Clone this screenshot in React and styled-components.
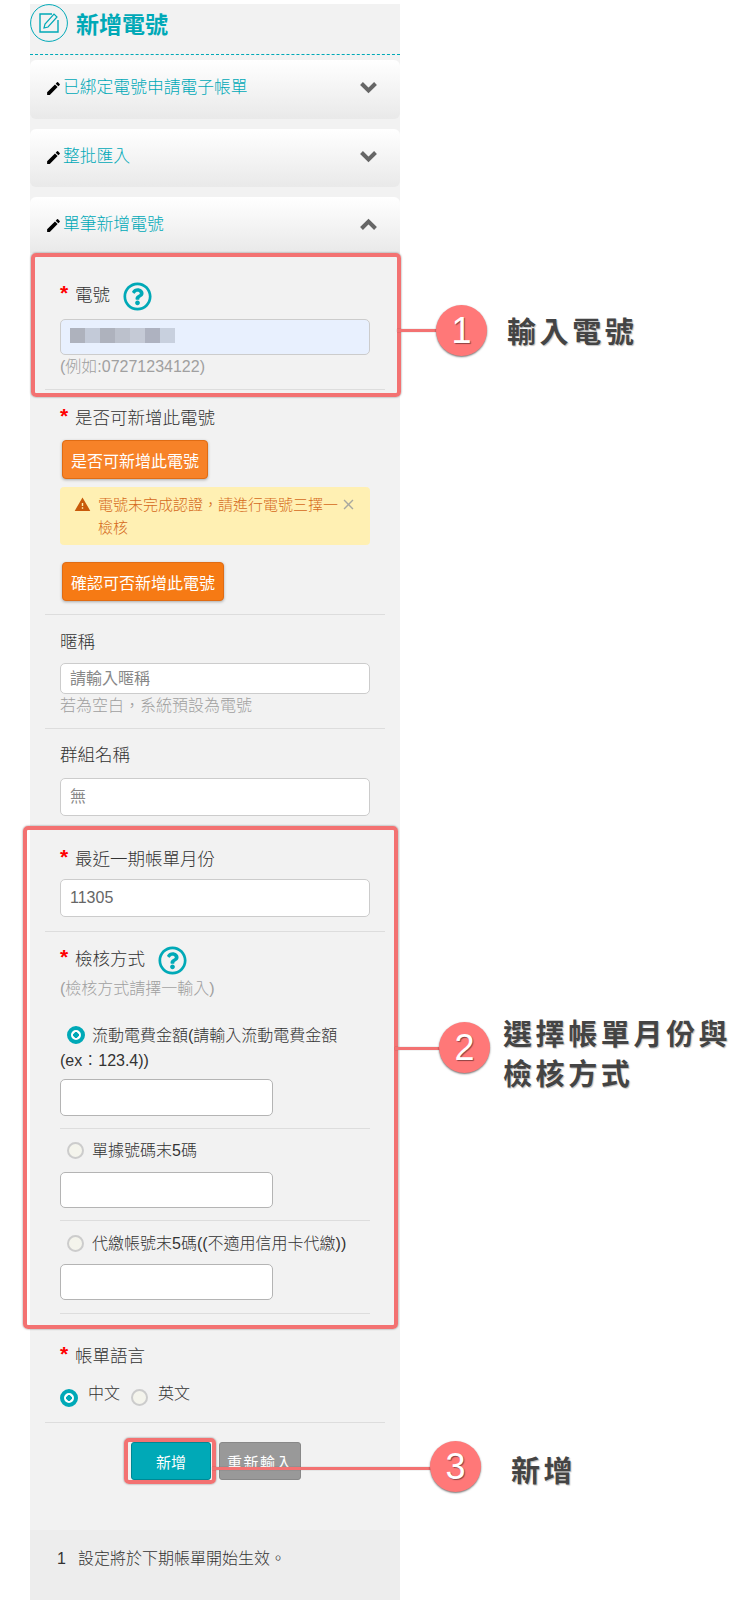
import React from 'react';
import styled, {createGlobalStyle} from 'styled-components';
import {MdEdit, MdWarning, MdClose} from 'react-icons/md';
import {FaRegQuestionCircle} from 'react-icons/fa';

const teal = '#00a9b7';
const coral = '#f37272';

const GlobalStyle = createGlobalStyle`
  html, body {
    margin: 0;
    padding: 0;
    background: #fff;
    font-family: "Liberation Sans", "Noto Sans CJK TC", sans-serif;
    font-weight: 300;
    color: #333;
  }
`;

const Page = styled.div`
  position: relative;
  width: 736px;
  height: 1601px;
  overflow: hidden;
  padding-top: 4px;
  box-sizing: border-box;
`;

const Panel = styled.div`
  margin-left: 30px;
  width: 370px;
  height: 1596px;
  background: #f2f2f2;
  display: flex;
  flex-direction: column;
`;

const Header = styled.div`
  height: 50px;
  display: flex;
  align-items: flex-start;
  gap: 8px;
  border-bottom: 1px dashed ${teal};
  box-sizing: content-box;
`;

const HeaderIcon = styled.svg`
  width: 38px;
  height: 38px;
`;

const HeaderTitle = styled.h1`
  margin: 0;
  font-size: 23px;
  line-height: 42px;
  font-weight: 700;
  color: ${teal};
`;

const AccordionHead = styled.div`
  height: ${(p) => p.$height}px;
  margin-top: ${(p) => p.$top}px;
  padding: 14px 23px 0 15px;
  box-sizing: border-box;
  display: flex;
  align-items: flex-start;
  background: linear-gradient(#ffffff, #e9e9e9);
  border-radius: 6px 6px ${(p) => (p.$open ? '0 0' : '6px 6px')};
  font-size: 16.8px;
  line-height: 28px;
  color: ${teal};
`;

const Pencil = styled(MdEdit)`
  width: 17px;
  height: 17px;
  color: #000;
  margin: 6px 1px 0 0;
  flex: none;
`;

const Chevron = styled.svg`
  width: 17px;
  height: 13px;
  margin: 7px 0 0 auto;
  fill: none;
  stroke: #666;
  stroke-width: 4;
`;

const Field = styled.div`
  margin: 0 15px;
  padding: ${(p) => p.$top}px 15px ${(p) => p.$bottom}px;
  border-bottom: ${(p) => (p.$plain ? 'none' : '1px solid #ddd')};
`;

const Label = styled.div`
  display: flex;
  align-items: center;
  height: 24px;
  font-size: 17.5px;
  color: #333;
`;

const Star = styled.span`
  color: #f00;
  font-size: 21px;
  font-weight: 700;
  width: 15px;
  margin-top: -1px;
`;

const Help = styled(FaRegQuestionCircle)`
  width: 29px;
  height: 29px;
  color: ${teal};
  margin: 6px 0 0 13px;
`;

const Input = styled.input`
  display: block;
  width: ${(p) => p.$width || 310}px;
  height: ${(p) => p.$height || 37}px;
  margin-top: ${(p) => p.$top || 0}px;
  padding: 0 9px;
  box-sizing: border-box;
  background: ${(p) => (p.$filled ? '#e8f0fe' : '#fff')};
  border: 1px solid ${(p) => p.$line || '#ccc'};
  border-radius: 5px;
  font-family: inherit;
  font-size: 16px;
  color: #666;
  outline: none;

  &::placeholder {
    color: #888;
  }
`;

const InputWrap = styled.div`
  position: relative;
  margin-top: 14px;
`;

const Blur = styled.div`
  position: absolute;
  left: 10px;
  top: 9px;
  display: flex;
`;

const BlurCell = styled.span`
  width: 15px;
  height: 15px;
  background: ${(p) => p.$color};
`;

const Hint = styled.div`
  font-size: 16px;
  line-height: 24px;
  color: #a0a0a0;
  margin-top: ${(p) => p.$top || 0}px;
`;

const OrangeButton = styled.button`
  display: block;
  margin: ${(p) => p.$top}px 0 0 2px;
  height: 39px;
  padding: 0 8px;
  background: ${(p) => p.$bg};
  border: 1px solid #e06c14;
  border-radius: 4px;
  box-shadow: 0 1px 3px rgba(0, 0, 0, 0.3);
  color: #fff;
  font-family: inherit;
  font-size: 16px;
`;

const Alert = styled.div`
  position: relative;
  margin-top: 8px;
  width: 310px;
  height: 58px;
  padding: 6px 30px 0 38px;
  box-sizing: border-box;
  background: #fff0b3;
  border-radius: 4px;
  font-size: 15px;
  line-height: 23px;
  color: #d5691a;
`;

const AlertIcon = styled(MdWarning)`
  position: absolute;
  left: 14px;
  top: 9px;
  width: 17px;
  height: 17px;
  color: #c85a0a;
`;

const AlertClose = styled(MdClose)`
  position: absolute;
  right: 13px;
  top: 9px;
  width: 17px;
  height: 17px;
  color: #a8a8a0;
`;

const OptionText = styled.div`
  font-size: 16px;
  line-height: 25px;
  color: #333;
  margin-top: ${(p) => p.$top || 0}px;
`;

const Radio = styled.span`
  display: inline-block;
  vertical-align: ${(p) => p.$align || '-3px'};
  width: ${(p) => (p.$on ? 18 : 17)}px;
  height: ${(p) => (p.$on ? 18 : 17)}px;
  margin: ${(p) => p.$margin || '0'};
  box-sizing: border-box;
  border-radius: 50%;
  border: ${(p) => (p.$on ? `4px solid ${teal}` : '2px solid #ccc')};
  background: ${(p) =>
    p.$on
      ? `radial-gradient(circle, ${teal} 0 2.6px, #fff 3px)`
      : '#f4f4ec'};
`;

const SubDivider = styled.div`
  height: 1px;
  background: #ddd;
  margin: ${(p) => p.$top}px 0 ${(p) => p.$bottom}px;
`;

const LangRow = styled.div`
  display: flex;
  align-items: flex-start;
  margin-top: 18px;
  font-size: 16px;
  line-height: 20px;
`;

const LangText = styled.span`
  margin: 0 ${(p) => p.$right || 0}px 0 10px;
`;

const ButtonRow = styled.div`
  display: flex;
  gap: 8px;
  margin: 19px 0 0 101px;
`;

const ActionButton = styled.button`
  width: ${(p) => p.$width}px;
  height: 38px;
  padding: 0;
  background: ${(p) => p.$bg};
  border: 1px solid ${(p) => p.$line};
  border-radius: 3px;
  color: #fff;
  font-family: inherit;
  font-size: 15px;
  letter-spacing: ${(p) => p.$spacing || 0}px;
`;

const Notes = styled.div`
  margin-top: auto;
  height: 70px;
  padding: 17px 0 0 27px;
  box-sizing: border-box;
  background: #ededed;
  display: flex;
  gap: 12px;
  font-size: 16px;
  line-height: 24px;
  color: #333;
`;

// annotation overlays drawn on top of the page
const Box = styled.div`
  position: absolute;
  left: ${(p) => p.$x}px;
  top: ${(p) => p.$y}px;
  width: ${(p) => p.$w}px;
  height: ${(p) => p.$h}px;
  box-sizing: border-box;
  border: 4px solid ${coral};
  border-radius: 5px;
  box-shadow: 0 0 2px rgba(0, 0, 0, 0.5);
`;

const Line = styled.div`
  position: absolute;
  left: ${(p) => p.$x}px;
  top: ${(p) => p.$y}px;
  width: ${(p) => p.$w}px;
  height: 3px;
  background: ${coral};
  box-shadow: 0 0 1px rgba(0, 0, 0, 0.5);
`;

const Bubble = styled.div`
  position: absolute;
  left: ${(p) => p.$x}px;
  top: ${(p) => p.$y}px;
  width: 51px;
  height: 51px;
  border-radius: 50%;
  background: #ff7878;
  box-shadow: 0 1px 2px rgba(0, 0, 0, 0.55);
  color: #fff;
  font-size: 36px;
  font-weight: 400;
  line-height: 51px;
  text-align: center;
  text-shadow: 1px 1px 1px rgba(0, 0, 0, 0.45);
`;

const Callout = styled.div`
  position: absolute;
  left: ${(p) => p.$x}px;
  top: ${(p) => p.$y}px;
  font-family: "Noto Sans CJK TC", sans-serif;
  font-size: 29px;
  line-height: 40px;
  font-weight: 700;
  letter-spacing: 3.6px;
  white-space: nowrap;
  color: #444;
  text-shadow: 1px 1px 1px rgba(0, 0, 0, 0.25);
`;

const blurColors = ['#aeb2bd', '#c3cad8', '#aeb2bd', '#bcc1cc', '#c5cad6', '#aeb2c0', '#c8d0de'];

const ChevronIcon = ({up}) => (
  <Chevron viewBox="0 0 17 13">
    <path d={up ? 'M1.5 10.5l7-7 7 7' : 'M1.5 2.5l7 7 7-7'} />
  </Chevron>
);

function App() {
  return (
    <Page>
      <GlobalStyle />
      <Panel>
        <Header>
          <HeaderIcon viewBox="0 0 38 38" fill="none" stroke={teal} strokeWidth="1">
            <circle cx="19" cy="19" r="18.4" />
            <path d="M22 10H10v18h18V16" strokeWidth="1.4" />
            <path d="M14 24l1-4 9-10 3 3-9 10z" strokeWidth="1.2" />
          </HeaderIcon>
          <HeaderTitle>新增電號</HeaderTitle>
        </Header>

        <AccordionHead $height={59} $top={5}>
          <Pencil />已綁定電號申請電子帳單
          <ChevronIcon />
        </AccordionHead>
        <AccordionHead $height={58} $top={10}>
          <Pencil />整批匯入
          <ChevronIcon />
        </AccordionHead>
        <AccordionHead $height={56} $top={10} $open>
          <Pencil />單筆新增電號
          <ChevronIcon up />
        </AccordionHead>

        <Field $top={28} $bottom={10}>
          <Label><Star>*</Star>電號<Help /></Label>
          <InputWrap>
            <Input $filled $height={36} readOnly />
            <Blur>
              {blurColors.map((color, i) => (
                <BlurCell key={i} $color={color} />
              ))}
            </Blur>
          </InputWrap>
          <Hint>(例如:07271234122)</Hint>
        </Field>

        <Field $top={14} $bottom={13}>
          <Label><Star>*</Star>是否可新增此電號</Label>
          <OrangeButton $top={12} $bg="#f78228">是否可新增此電號</OrangeButton>
          <Alert>
            <AlertIcon />
            電號未完成認證，請進行電號三擇一檢核
            <AlertClose />
          </Alert>
          <OrangeButton $top={17} $bg="#f67a14">確認可否新增此電號</OrangeButton>
        </Field>

        <Field $top={13} $bottom={10}>
          <Label>暱稱</Label>
          <Input $top={11} $height={31} placeholder="請輸入暱稱" readOnly />
          <Hint>若為空白，系統預設為電號</Hint>
        </Field>

        <Field $top={12} $bottom={12} $plain>
          <Label>群組名稱</Label>
          <Input $top={13} $height={38} placeholder="無" readOnly />
        </Field>

        <Field $top={17} $bottom={14}>
          <Label><Star>*</Star>最近一期帳單月份</Label>
          <Input $top={10} $height={38} value="11305" readOnly />
        </Field>

        <Field $top={13} $bottom={0} $plain>
          <Label><Star>*</Star>檢核方式<Help /></Label>
          <Hint $top={8}>(檢核方式請擇一輸入)</Hint>
          <OptionText $top={22}>
            <Radio $on $margin="0 7px 0 7px" />流動電費金額(請輸入流動電費金額(ex：123.4))
          </OptionText>
          <Input $top={6} $width={213} $height={37} $line="#b4b4b4" readOnly />
          <SubDivider $top={12} $bottom={9} />
          <OptionText>
            <Radio $margin="0 8px 0 7px" />單據號碼末5碼
          </OptionText>
          <Input $top={9} $width={213} $height={36} $line="#b4b4b4" readOnly />
          <SubDivider $top={12} $bottom={10} />
          <OptionText>
            <Radio $margin="0 8px 0 7px" />代繳帳號末5碼((不適用信用卡代繳))
          </OptionText>
          <Input $top={8} $width={213} $height={36} $line="#b4b4b4" readOnly />
          <SubDivider $top={13} $bottom={0} />
        </Field>

        <Field $top={28} $bottom={15}>
          <Label><Star>*</Star>帳單語言</Label>
          <LangRow>
            <Radio $on $align="top" $margin="5px 0 0 0" />
            <LangText $right={11}>中文</LangText>
            <Radio $align="top" $margin="5px 0 0 0" />
            <LangText>英文</LangText>
          </LangRow>
        </Field>

        <ButtonRow>
          <ActionButton $width={80} $bg={teal} $line="#008894">新增</ActionButton>
          <ActionButton $width={82} $bg="#999" $line="#888" $spacing={1.5}>重新輸入</ActionButton>
        </ButtonRow>

        <Notes>
          <span>1</span>
          <span>設定將於下期帳單開始生效。</span>
        </Notes>
      </Panel>

      <Box $x={31} $y={253} $w={370} $h={144} />
      <Line $x={397} $y={329} $w={42} />
      <Bubble $x={436} $y={305}>1</Bubble>
      <Callout $x={507} $y={310}>輸入電號</Callout>

      <Box $x={23} $y={826} $w={375} $h={503} />
      <Line $x={395} $y={1047} $w={46} />
      <Bubble $x={439} $y={1022}>2</Bubble>
      <Callout $x={503} $y={1012}>選擇帳單月份與<br />檢核方式</Callout>

      <Box $x={124} $y={1438} $w={92} $h={46} />
      <Line $x={212} $y={1467} $w={220} />
      <Bubble $x={430} $y={1441}>3</Bubble>
      <Callout $x={511} $y={1449}>新增</Callout>
    </Page>
  );
}

export default App;
